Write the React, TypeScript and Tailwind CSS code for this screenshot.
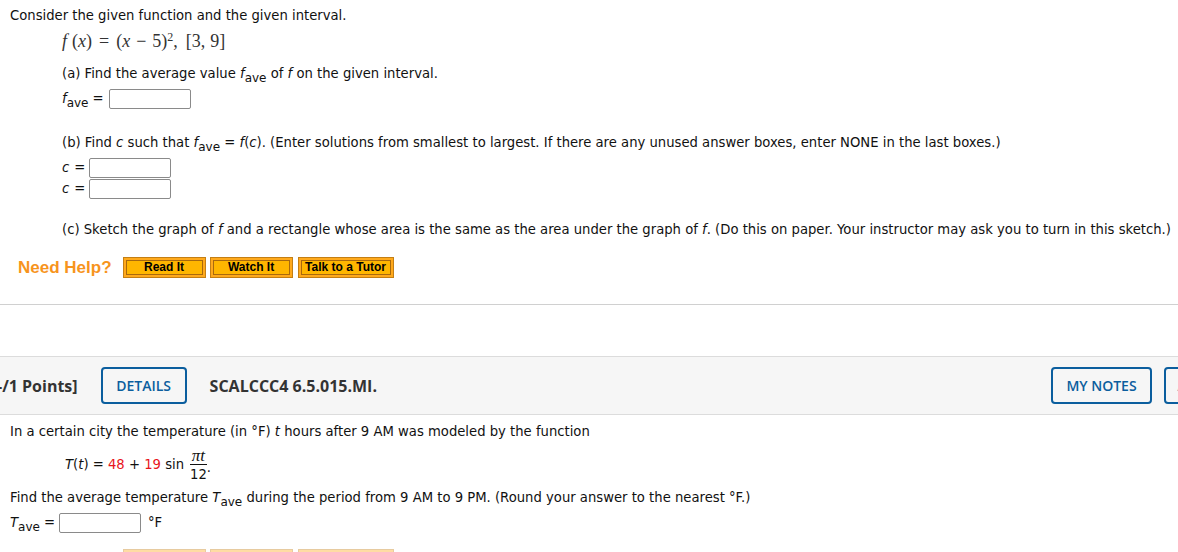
import React from 'react'

const Box = () => (
    <span className='inline-block w-[82px] h-[20px] border border-[#8a8a8a] rounded-[2px] bg-white align-middle' />
)

const Ave = ({ sym }: { sym: string }) => (
    <span>
        <i>{sym}</i>
        <span className='text-[12px] relative top-[4px]'>ave</span>
    </span>
)

const HelpButton = ({ label }: { label: string }) => (
    <span className='block w-full border border-[#c47f14] bg-[#ffa91c] p-[2px]'>
        <span className='block border border-[#a9690c] bg-[#ffb600] h-[15px] leading-[13px] text-center text-[12px] font-bold text-black font-["Liberation_Sans",Arial,sans-serif]'>
            {label}
        </span>
    </span>
)

const NeedHelp = ({ faded }: { faded?: boolean }) => (
    <div className={'flex items-center pl-[18px] h-[21px] ' + (faded ? 'opacity-40' : '')}>
        <span className='text-[17px] leading-[21px] font-bold text-[#f7941d] font-["Liberation_Sans",Arial,sans-serif] mr-[11px]'>Need Help?</span>
        <div className='flex'>
            <div className='w-[83px] mr-[4px]'><HelpButton label='Read It' /></div>
            <div className='w-[83px] mr-[5px]'><HelpButton label='Watch It' /></div>
            <div className='w-[96px]'><HelpButton label='Talk to a Tutor' /></div>
        </div>
    </div>
)

const OutlineButton = ({ label, w }: { label: string; w: string }) => (
    <span className={'flex items-center justify-center h-[37px] border-2 border-[#0b5e9e] rounded-[4px] text-[#0b5e9e] text-[14px] font-semibold shrink-0 ' + w}>
        {label}
    </span>
)

export default function App() {
    return (
        <div className='w-[1178px] h-[552px] overflow-hidden bg-white text-[13.2px] text-[#111] font-["DejaVu_Sans",Verdana,sans-serif]'>
            <p className='pl-[10px] pt-[8px] leading-[16px]'>Consider the given function and the given interval.</p>
            <div className='pl-[62px]'>
                <p className='mt-[6px] leading-[22px] text-[18px] text-[#333] font-["Liberation_Serif","Times_New_Roman",serif] whitespace-nowrap'>
                    <i>f</i><span className='ml-[5px]'>(</span><i>x</i>)<span className='mx-[7px]'>=</span>(<i>x</i><span className='mx-[6px]'>−</span>5)<sup className='text-[12px]'>2</sup>,<span className='ml-[8px]'>[3,</span><span className='ml-[5px]'>9]</span>
                </p>
                <p className='mt-[14px] leading-[16px]'>
                    (a) Find the average value <Ave sym='f' /> of <i>f</i> on the given interval.
                </p>
                <div className='mt-[7px] flex items-center h-[20px]'>
                    <Ave sym='f' />
                    <span className='ml-[4px] mr-[5px]'>=</span>
                    <Box />
                </div>
                <p className='mt-[26px] leading-[16px] whitespace-nowrap'>
                    (b) Find <i>c</i> such that <Ave sym='f' /> = <i>f</i>(<i>c</i>). (Enter solutions from smallest to largest. If there are any unused answer boxes, enter NONE in the last boxes.)
                </p>
                <div className='mt-[7px] flex items-center h-[20px]'>
                    <i>c</i><span className='ml-[5px] mr-[4px]'>=</span><Box />
                </div>
                <div className='mt-[1px] flex items-center h-[20px]'>
                    <i>c</i><span className='ml-[5px] mr-[4px]'>=</span><Box />
                </div>
                <p className='mt-[23px] leading-[16px] whitespace-nowrap'>
                    (c) Sketch the graph of <i>f</i> and a rectangle whose area is the same as the area under the graph of <i>f</i>. (Do this on paper. Your instructor may ask you to turn in this sketch.)
                </p>
            </div>
            <div className='mt-[19px]'>
                <NeedHelp />
            </div>
            <div className='mt-[26px] h-px bg-[#d0d0d0]' />

            <div className='mt-[51px] border-y border-[#dcdcdc] bg-[#f6f6f6] h-[59px] flex items-center font-["Open_Sans",sans-serif]'>
                <span className='-ml-[3px] text-[16px] font-bold text-[#333]'>-/1 Points]</span>
                <span className='ml-[23px]'><OutlineButton label='DETAILS' w='w-[86px]' /></span>
                <span className='ml-[23px] text-[16px] font-bold text-[#333]'>SCALCCC4 6.5.015.MI.</span>
                <div className='ml-auto -mr-[146px] flex gap-[12px]'>
                    <OutlineButton label='MY NOTES' w='w-[101px]' />
                    <OutlineButton label='ASK YOUR TEACHER' w='w-[160px]' />
                </div>
            </div>

            <p className='pl-[10px] mt-[9px] leading-[16px]'>
                In a certain city the temperature (in °F) <i>t</i> hours after 9 AM was modeled by the function
            </p>
            <div className='pl-[65px] mt-[7px] flex items-center h-[35px]'>
                <span><i>T</i>(<i>t</i>) = <span className='text-[#e8141c]'>48</span> + <span className='text-[#e8141c]'>19</span> sin</span>
                <span className='inline-flex flex-col items-center ml-[6px] mt-[3px]'>
                    <span className='px-[1px] italic font-["Liberation_Serif",serif] text-[17px] leading-[16px]'>πt</span>
                    <span className='w-full h-px bg-[#111]' />
                    <span className='leading-[19px]'>12</span>
                </span>
                <span className='mt-[6px]'>.</span>
            </div>
            <p className='pl-[10px] mt-[8px] leading-[16px]'>
                Find the average temperature <Ave sym='T' /> during the period from 9 AM to 9 PM. (Round your answer to the nearest °F.)
            </p>
            <div className='pl-[10px] mt-[7px] flex items-center h-[20px]'>
                <Ave sym='T' />
                <span className='ml-[4px] mr-[4px]'>=</span>
                <Box />
                <span className='ml-[7px]'>°F</span>
            </div>
            <div className='mt-[16px]'>
                <NeedHelp faded />
            </div>
        </div>
    )
}
